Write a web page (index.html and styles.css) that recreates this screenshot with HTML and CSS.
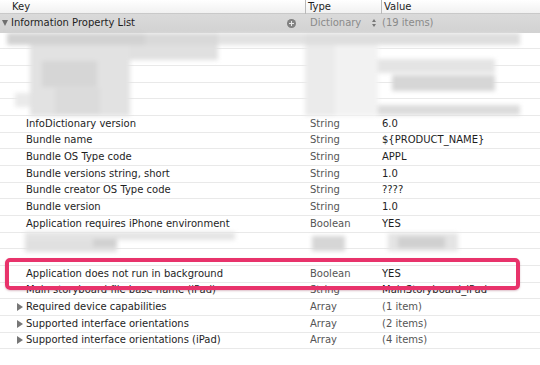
FILE: index.html
```html
<!DOCTYPE html>
<html lang="en">
<head>
    <meta charset="UTF-8" />
    <title>Info.plist</title>
    <link rel="stylesheet" href="styles.css">
</head>
<body>
<div class="plist">
    <div class="head">
        <span class="cell key">Key</span>
        <span class="cell type">Type</span>
        <span class="cell val">Value</span>
    </div>
    <div class="row root">
        <span class="cell key"><span class="tri down"></span>Information Property List<span class="add"></span></span>
        <span class="cell type">Dictionary<span class="stepper"></span></span>
        <span class="cell val">(19 items)</span>
    </div>
    <div class="row"></div>
    <div class="row"></div>
    <div class="row"></div>
    <div class="row"></div>
    <div class="row"></div>
    <div class="row">
        <span class="cell key">InfoDictionary version</span>
        <span class="cell type">String</span>
        <span class="cell val">6.0</span>
    </div>
    <div class="row">
        <span class="cell key">Bundle name</span>
        <span class="cell type">String</span>
        <span class="cell val">${PRODUCT_NAME}</span>
    </div>
    <div class="row">
        <span class="cell key">Bundle OS Type code</span>
        <span class="cell type">String</span>
        <span class="cell val">APPL</span>
    </div>
    <div class="row">
        <span class="cell key">Bundle versions string, short</span>
        <span class="cell type">String</span>
        <span class="cell val">1.0</span>
    </div>
    <div class="row">
        <span class="cell key">Bundle creator OS Type code</span>
        <span class="cell type">String</span>
        <span class="cell val">????</span>
    </div>
    <div class="row">
        <span class="cell key">Bundle version</span>
        <span class="cell type">String</span>
        <span class="cell val">1.0</span>
    </div>
    <div class="row">
        <span class="cell key">Application requires iPhone environment</span>
        <span class="cell type">Boolean</span>
        <span class="cell val">YES</span>
    </div>
    <div class="row"></div>
    <div class="row"></div>
    <div class="row">
        <span class="cell key">Application does not run in background</span>
        <span class="cell type">Boolean</span>
        <span class="cell val">YES</span>
    </div>
    <div class="row">
        <span class="cell key">Main storyboard file base name (iPad)</span>
        <span class="cell type">String</span>
        <span class="cell val">MainStoryboard_iPad</span>
    </div>
    <div class="row">
        <span class="cell key"><span class="tri right"></span>Required device capabilities</span>
        <span class="cell type">Array</span>
        <span class="cell val dim">(1 item)</span>
    </div>
    <div class="row">
        <span class="cell key"><span class="tri right"></span>Supported interface orientations</span>
        <span class="cell type">Array</span>
        <span class="cell val dim">(2 items)</span>
    </div>
    <div class="row">
        <span class="cell key"><span class="tri right"></span>Supported interface orientations (iPad)</span>
        <span class="cell type">Array</span>
        <span class="cell val dim">(4 items)</span>
    </div>

    <!-- redacted parts of the screenshot -->
    <div class="redact redact-a"></div>
    <div class="redact redact-b"></div>
    <!-- highlight box -->
    <div class="mark"></div>
</div>
</body>
</html>
```

FILE: styles.css
```css
body {
    margin: 0;
    background: #fff;
    font-family: 'DejaVu Sans', sans-serif;
    font-size: 10px;
    color: #1e1e1e;
}
.plist {
    position: relative;
    width: 540px;
    height: 365px;
    overflow: hidden;
}
.head, .row {
    display: grid;
    grid-template-columns: 305px 76px 1fr;
    align-items: center;
}
.head {
    height: 13px;
    background: linear-gradient(#ffffff, #f1f1f1);
    border-bottom: 1px solid #c9c9c9;
}
.head .key {
    padding-left: 12px;
}
.head .type, .head .val {
    border-left: 1px solid #b9b9b9;
    padding-left: 2px;
}
.row {
    height: 16.67px;
    box-sizing: border-box;
    border-bottom: 1px solid #e9e9e9;
}
.cell {
    position: relative;
    white-space: nowrap;
    line-height: 14px;
}
.row .key {
    padding-left: 26px;
}
.row .type {
    padding-left: 5px;
    color: #555;
}
.row .val {
    padding-left: 1px;
}
.val.dim {
    color: #555;
}
.root {
    height: 18.7px;
    background: linear-gradient(#dadada, #d2d2d2);
    border-bottom: none;
}
.root .key {
    padding-left: 11px;
}
.root .type, .root .val {
    color: #8a8a8a;
}
.tri {
    position: absolute;
    width: 0;
    height: 0;
}
.tri.down {
    left: 2px;
    top: 4px;
    border-left: 3.5px solid transparent;
    border-right: 3.5px solid transparent;
    border-top: 6px solid #6f6f6f;
}
.tri.right {
    left: 17px;
    top: 3px;
    border-top: 4px solid transparent;
    border-bottom: 4px solid transparent;
    border-left: 6px solid #777;
}
.add {
    position: absolute;
    left: 287px;
    top: 3px;
    width: 9px;
    height: 9px;
    border-radius: 50%;
    background: radial-gradient(circle, #8d8d8d, #767676);
}
.add::before, .add::after {
    content: '';
    position: absolute;
    background: #e8e8e8;
}
.add::before {
    left: 2px;
    top: 4px;
    width: 5px;
    height: 1px;
}
.add::after {
    left: 4px;
    top: 2px;
    width: 1px;
    height: 5px;
}
.stepper {
    position: absolute;
    left: 67px;
    top: 2px;
    width: 5px;
    height: 10px;
}
.stepper::before, .stepper::after {
    content: '';
    position: absolute;
    left: 0;
    border-left: 2.5px solid transparent;
    border-right: 2.5px solid transparent;
}
.stepper::before {
    top: 1px;
    border-bottom: 3px solid #777;
}
.stepper::after {
    top: 6px;
    border-top: 3px solid #777;
}
.redact {
    position: absolute;
    left: 0;
    width: 540px;
    filter: blur(2px);
}
.redact-a {
    top: 32.7px;
    height: 83px;
    background:
        linear-gradient(#d6d6d6, #d6d6d6) 42px 28px / 55px 26px no-repeat,
        linear-gradient(#dbdbdb, #dbdbdb) 55px 55px / 45px 26px no-repeat,
        linear-gradient(#e2e2e2, #e2e2e2) 30px 12px / 100px 71px no-repeat,
        linear-gradient(#e0e0e0, #e0e0e0) 130px 12px / 88px 15px no-repeat,
        linear-gradient(#e6e6e6, #e6e6e6) 100px 27px / 30px 18px no-repeat,
        linear-gradient(#eaeaea, #eaeaea) 15px 60px / 15px 14px no-repeat,
        linear-gradient(#ebebeb, #ebebeb) 305px 12px / 30px 71px no-repeat,
        linear-gradient(#f2f2f2, #f2f2f2) 335px 12px / 43px 71px no-repeat,
        linear-gradient(#e4e4e4, #e4e4e4) 378px 26px / 117px 14px no-repeat,
        linear-gradient(#d6d6d6, #d6d6d6) 392px 42px / 103px 16px no-repeat,
        linear-gradient(#dcdcdc, #dcdcdc) 378px 72px / 142px 10px no-repeat,
        linear-gradient(#d2d2d2, #d2d2d2) 7px 0.5px / 138px 12px no-repeat,
        linear-gradient(#d9d9d9, #d9d9d9) 145px 0.5px / 73px 12px no-repeat,
        linear-gradient(#e2e2e2, #e2e2e2) 218px 0.5px / 87px 12px no-repeat,
        linear-gradient(#dedede, #dedede) 305px 0.5px / 215px 12px no-repeat;
}
.redact-b {
    top: 231px;
    height: 24px;
    background:
        linear-gradient(#d0d0d0, #d0d0d0) 93px 8px / 24px 8px no-repeat,
        linear-gradient(#e4e4e4, #e4e4e4) 25px 1px / 210px 8px no-repeat,
        linear-gradient(#e0e0e0, #e0e0e0) 25px 8px / 92px 13px no-repeat,
        linear-gradient(#d6d6d6, #d6d6d6) 312px 5px / 33px 15px no-repeat,
        linear-gradient(#d0d0d0, #d0d0d0) 398px 6px / 47px 11px no-repeat,
        linear-gradient(#e4e4e4, #e4e4e4) 388px 2px / 70px 18px no-repeat;
}
.mark {
    position: absolute;
    left: 5px;
    top: 258px;
    width: 515px;
    height: 32px;
    box-sizing: border-box;
    border: 4px solid #e8336b;
    border-radius: 5px;
    box-shadow: 0 1px 2px rgba(120, 0, 40, 0.25);
}
```
